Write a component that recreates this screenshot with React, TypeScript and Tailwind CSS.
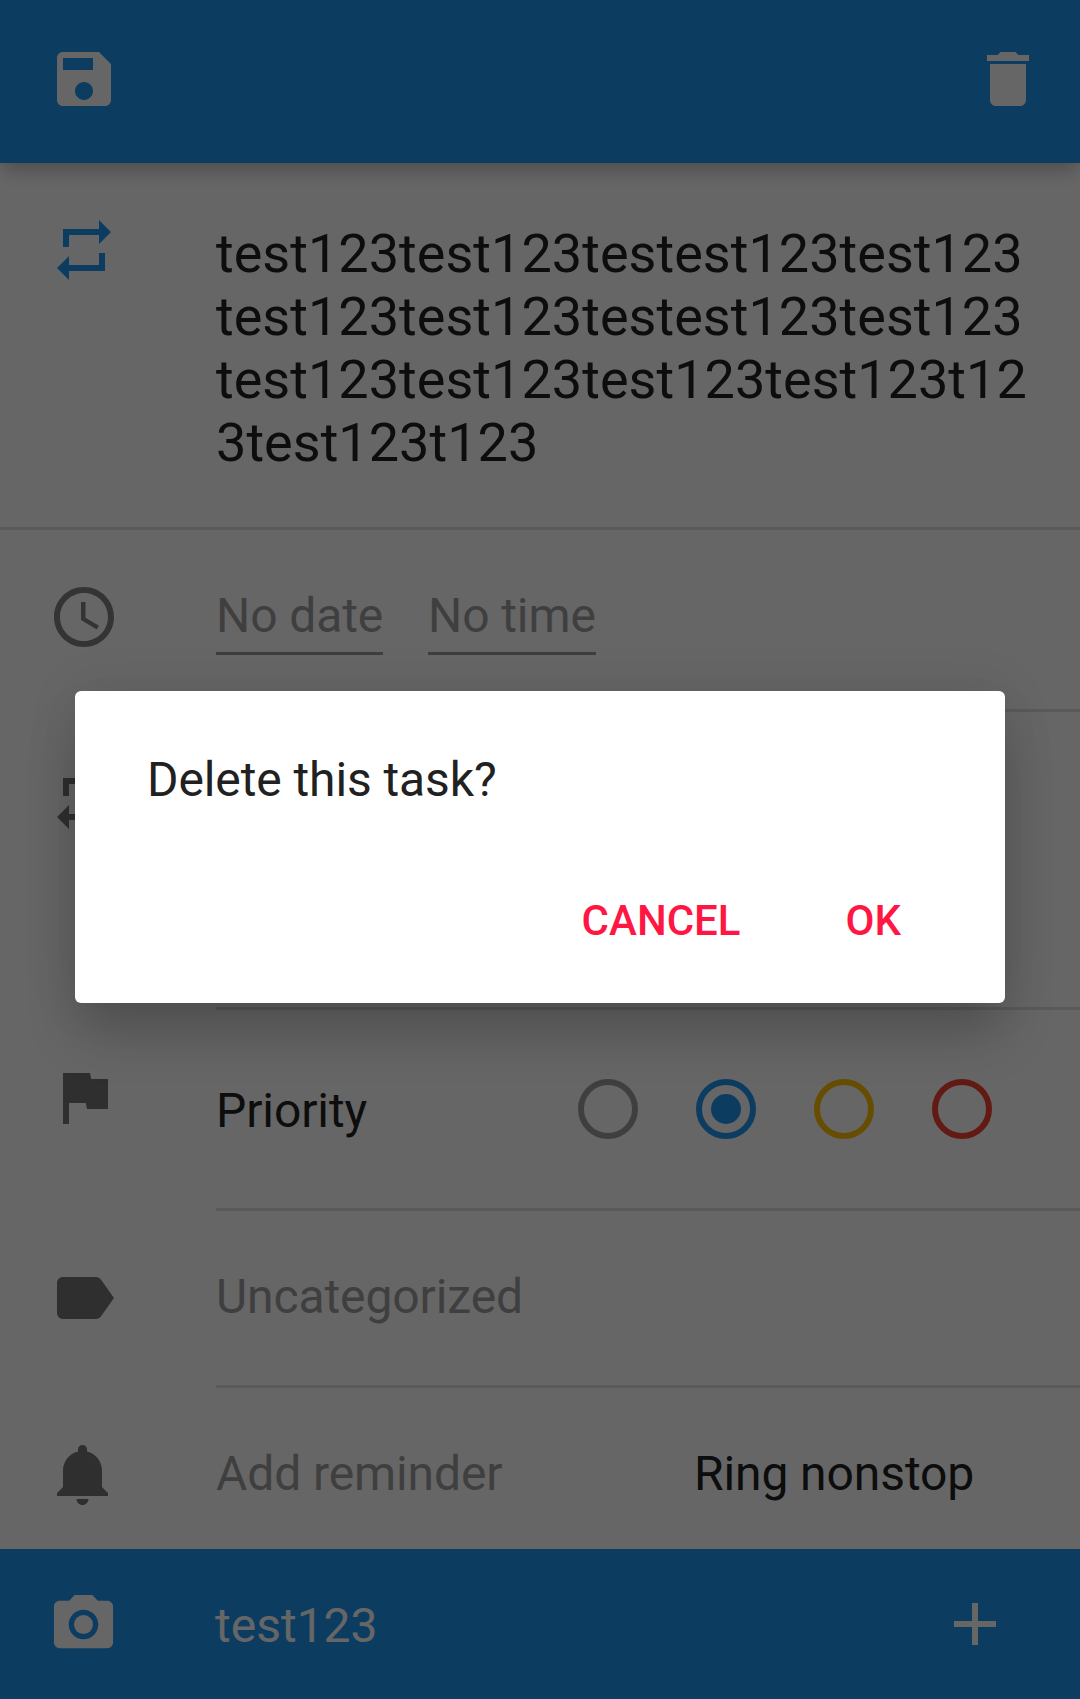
import type { ReactNode } from "react";

const PATHS = {
  save: "M17 3H5c-1.11 0-2 .9-2 2v14c0 1.1.89 2 2 2h14c1.1 0 2-.9 2-2V7l-4-4zm-5 16c-1.66 0-3-1.34-3-3s1.34-3 3-3 3 1.34 3 3-1.34 3-3 3zm3-10H5V5h10v4z",
  trash: "M6 19c0 1.1.9 2 2 2h8c1.1 0 2-.9 2-2V7H6v12zM19 4h-3.5l-1-1h-5l-1 1H5v2h14V4z",
  repeat: "M7 7h10v3l4-4-4-4v3H5v6h2V7zm10 10H7v-3l-4 4 4 4v-3h12v-6h-2v4z",
  clock:
    "M11.99 2C6.47 2 2 6.48 2 12s4.47 10 9.99 10C17.52 22 22 17.52 22 12S17.52 2 11.99 2zM12 20c-4.42 0-8-3.58-8-8s3.58-8 8-8 8 3.58 8 8-3.58 8-8 8zm.5-13H11v6l5.25 3.15.75-1.23-4.5-2.67z",
  flag: "M14.4 6L14 4H5v17h2v-7h5.6l.4 2h7V6z",
  label:
    "M17.63 5.84C17.27 5.33 16.67 5 16 5L5 5.01C3.9 5.01 3 5.9 3 7v10c0 1.1.9 1.99 2 1.99L16 19c.67 0 1.27-.33 1.63-.84L22 12l-4.37-6.16z",
  bell: "M11.5 22c1.1 0 2-.9 2-2h-4c0 1.1.9 2 2 2zm6.5-6v-5.5c0-3.07-2.13-5.64-5-6.32V3.5c0-.83-.67-1.5-1.5-1.5S10 2.67 10 3.5v.68c-2.87.68-5 3.25-5 6.32V16l-2 2v1h17v-1l-2-2z",
  camera:
    "M9 2L7.17 4H4c-1.1 0-2 .9-2 2v12c0 1.1.9 2 2 2h16c1.1 0 2-.9 2-2V6c0-1.1-.9-2-2-2h-3.17L15 2H9zm3 15c-2.76 0-5-2.24-5-5s2.24-5 5-5 5 2.24 5 5-2.24 5-5 5z",
  plus: "M19 13h-6v6h-2v-6H5v-2h6V5h2v6h6v2z",
};

function Icon({ name, className = "text-[#757575]" }: { name: keyof typeof PATHS; className?: string }) {
  return (
    <svg viewBox="0 0 24 24" fill="currentColor" className={`size-[72px] shrink-0 ${className}`}>
      <path d={PATHS[name]} />
    </svg>
  );
}

/** One setting: an icon gutter and a content column. */
function Row({
  icon,
  iconClass,
  height,
  divider = "inset",
  children,
}: {
  icon: keyof typeof PATHS;
  iconClass?: string;
  height: string;
  divider?: "inset" | "full" | "none";
  children?: ReactNode;
}) {
  return (
    <section className={`flex shrink-0 ${height} ${divider === "full" ? "border-b-3 border-[#e0e0e0]" : ""}`}>
      <div className="w-[216px] shrink-0 pl-12 pt-[51px]">
        <Icon name={icon} className={iconClass} />
      </div>
      <div className={`flex flex-1 items-start ${divider === "inset" ? "border-b-3 border-[#e0e0e0]" : ""}`}>
        {children}
      </div>
    </section>
  );
}

const PRIORITIES = [
  { ring: "border-[#9e9e9e]", selected: false },
  { ring: "border-[#2196f3]", selected: true },
  { ring: "border-[#ffc107]", selected: false },
  { ring: "border-[#f44336]", selected: false },
];

export default function App() {
  return (
    <div className="relative h-[1699px] w-[1080px] overflow-hidden bg-white font-['Roboto',sans-serif] text-[48px] leading-[57px] tracking-[-0.1px] text-[#212121]">
      <div className="flex h-full flex-col">
        <header className="z-10 flex h-[163px] shrink-0 items-start justify-between bg-[#2196f3] pl-12 pr-9 pt-[43px] shadow-[0_12px_17px_-3px_rgba(0,0,0,0.2),0_0_10px_rgba(0,0,0,0.06)]">
          <Icon name="save" className="text-white" />
          <Icon name="trash" className="text-white" />
        </header>

        <Row icon="repeat" iconClass="text-[#2196f3]" height="h-[367px]" divider="full">
          <p className="pt-[59px] text-[54px] leading-[63px] tracking-[0.03px] whitespace-nowrap">
            test123test123testest123test123
            <br />
            test123test123testest123test123
            <br />
            test123test123test123test123t12
            <br />
            3test123t123
          </p>
        </Row>

        <Row icon="clock" iconClass="text-[#838383]" height="h-[182px]">
          <div className="flex gap-[45px] pt-[57px] whitespace-nowrap text-[#9e9e9e]">
            <span className="w-[167px] border-b-3 border-[#9e9e9e] pb-2">No date</span>
            <span className="w-[168px] border-b-3 border-[#9e9e9e] pb-2">No time</span>
          </div>
        </Row>

        <Row icon="repeat" height="h-[298px]" />

        <Row icon="flag" height="h-[201px]">
          <span className="pt-[72px]">Priority</span>
          <div className="ml-auto flex gap-[58px] pr-[88px] pt-[69px]">
            {PRIORITIES.map((p) => (
              <span key={p.ring} className={`flex size-[60px] items-center justify-center rounded-full border-6 ${p.ring}`}>
                {p.selected && <span className="size-[30px] shrink-0 rounded-full bg-[#2196f3]" />}
              </span>
            ))}
          </div>
        </Row>

        <Row icon="label" height="h-[177px]">
          <span className="pt-[57px] text-[#9e9e9e]">Uncategorized</span>
        </Row>

        <Row icon="bell" height="h-[161px]" divider="none">
          <span className="w-[478px] pt-[57px] text-[#9e9e9e]">Add reminder</span>
          <span className="pt-[57px]">Ring nonstop</span>
        </Row>

        <footer className="flex h-[150px] shrink-0 items-start bg-[#2196f3] pl-12 pt-[39px] text-white">
          <svg viewBox="0 0 24 24" fill="currentColor" className="mt-px size-[71px] shrink-0">
            <path d={PATHS.camera} />
            <circle cx="12" cy="12" r="3.2" />
          </svg>
          <span className="ml-24 pt-[9px] tracking-normal">test123</span>
          <Icon name="plus" className="mr-[69px] ml-auto" />
        </footer>
      </div>

      <div className="absolute inset-0 z-20 bg-black/60 px-[75px] pt-[691px]">
        <div
          role="alertdialog"
          className="flex h-[312px] flex-col rounded-[6px] bg-white px-[72px] pt-[60px] shadow-[0_34px_54px_-4px_rgba(0,0,0,0.2),0_0_54px_rgba(0,0,0,0.09)]"
        >
          <p>Delete this task?</p>
          <div className="mt-[88px] flex justify-end gap-[105px] pr-8 text-[42px] leading-[49px] font-medium tracking-normal text-[#ff1744]">
            <button>CANCEL</button>
            <button>OK</button>
          </div>
        </div>
      </div>
    </div>
  );
}
